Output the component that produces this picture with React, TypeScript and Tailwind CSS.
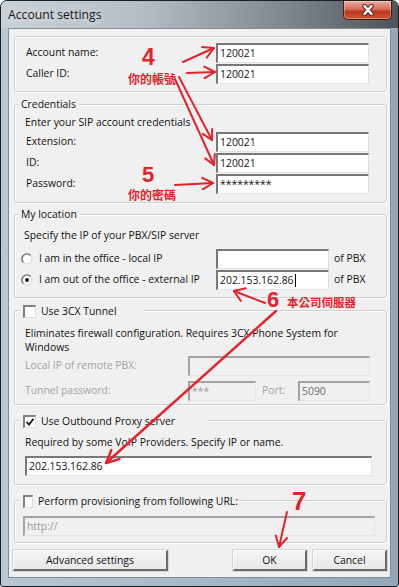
import React from "react";

const RED = "#e3232b";

function Arrow({
  x1,
  y1,
  x2,
  y2,
  len = 11,
  spread = 0.5,
  w = 2,
}: {
  x1: number;
  y1: number;
  x2: number;
  y2: number;
  len?: number;
  spread?: number;
  w?: number;
}) {
  const a = Math.atan2(y2 - y1, x2 - x1);
  const p1 = `${x2 - len * Math.cos(a - spread)},${y2 - len * Math.sin(a - spread)}`;
  const p2 = `${x2 - len * Math.cos(a + spread)},${y2 - len * Math.sin(a + spread)}`;
  return (
    <g>
      <line x1={x1} y1={y1} x2={x2} y2={y2} stroke={RED} strokeWidth={w} strokeLinecap="round" />
      <polyline
        points={`${p1} ${x2},${y2} ${p2}`}
        fill="none"
        stroke={RED}
        strokeWidth={w}
        strokeLinecap="round"
        strokeLinejoin="round"
      />
    </g>
  );
}

function TextBox({
  className = "",
  children,
  disabled = false,
}: {
  className?: string;
  children?: React.ReactNode;
  disabled?: boolean;
}) {
  const base =
    "h-[20px] flex items-center pl-[2px] border-t-2 border-l-2 border-r border-b whitespace-nowrap overflow-hidden leading-none";
  const look = disabled
    ? "bg-[#f0f0f0] border-t-[#a3a3a3] border-l-[#a3a3a3] border-r-[#e4e4e4] border-b-[#e4e4e4]"
    : "bg-white border-t-[#787878] border-l-[#787878] border-r-[#e1e1e1] border-b-[#e1e1e1]";
  return <div className={`${base} ${look} ${className}`}>{children}</div>;
}

function Check({ checked = false }: { checked?: boolean }) {
  return (
    <div className="w-[13px] h-[13px] bg-white border-t-2 border-l-2 border-r border-b border-t-[#808080] border-l-[#808080] border-r-[#dcdcdc] border-b-[#dcdcdc] flex items-center justify-center">
      {checked && (
        <svg width="10" height="10" viewBox="0 0 10 10">
          <path d="M1.5 5 L4 7.6 L8.6 1.8" fill="none" stroke="#111" strokeWidth="1.8" />
        </svg>
      )}
    </div>
  );
}

function Radio({ checked = false }: { checked?: boolean }) {
  return (
    <svg width="12" height="12" viewBox="0 0 12 12">
      <circle cx="6" cy="6" r="5" fill="#fff" stroke="#d6d6d6" strokeWidth="1" />
      <path d="M2.4 9.6 A5 5 0 0 1 9.6 2.4" fill="none" stroke="#6e6e6e" strokeWidth="1.4" />
      {checked && <circle cx="6" cy="6" r="1.9" fill="#111" />}
    </svg>
  );
}

function Group({
  className = "",
  legend,
  children,
}: {
  className?: string;
  legend?: React.ReactNode;
  children?: React.ReactNode;
}) {
  return (
    <div
      className={`relative ml-[5px] w-[373px] border border-[#cfcfcf] rounded-[3px] shadow-[inset_1px_1px_0_#ffffff,1px_1px_0_#ffffff] ${className}`}
    >
      {legend}
      {children}
    </div>
  );
}

function TextLegend({ label }: { label: string }) {
  return (
    <div className="absolute left-[3px] top-[-8px] h-[14px] px-[3px] bg-[#f0f0f0] leading-[14px]">{label}</div>
  );
}

function CheckLegend({ label, checked = false, w }: { label: string; checked?: boolean; w: string }) {
  return (
    <div className={`absolute left-[5px] top-[-7px] h-[14px] pl-[3px] bg-[#f0f0f0] flex items-center gap-[5px] ${w}`}>
      <Check checked={checked} />
      <span className="leading-[14px] whitespace-nowrap">{label}</span>
    </div>
  );
}

function Row({ label, value }: { label: string; value: string }) {
  return (
    <div className="flex items-center h-[20px]">
      <div className="w-[201px] pl-[11px]">{label}</div>
      <TextBox className="w-[153px]">{value}</TextBox>
    </div>
  );
}

function Button({ className = "", children }: { className?: string; children: React.ReactNode }) {
  return (
    <div
      className={`h-[21px] flex items-center justify-center bg-[linear-gradient(180deg,#f4f4f4,#e8e8e8)] border-t border-l border-r-2 border-b-2 border-t-[#fdfdfd] border-l-[#fdfdfd] border-r-[#6a6a6a] border-b-[#6a6a6a] shadow-[0_0_0_1px_#d4d4d4] leading-none ${className}`}
    >
      {children}
    </div>
  );
}

export default function App() {
  return (
    <div className="relative w-[399px] h-[587px] overflow-hidden bg-white font-['Open_Sans','Noto_Sans',sans-serif] text-[10.4px] text-[#111]">
      <div className="w-[399px] h-[587px] flex flex-col border border-[#1f1f1f] rounded-t-[7px] rounded-b-[3px] bg-[linear-gradient(90deg,#b9c7d3,#93a8ba)] overflow-hidden">
        {/* Title bar */}
        <div className="h-[27px] shrink-0 flex items-start bg-[linear-gradient(90deg,#c9d1d8_0%,#b5bec6_35%,#7f878e_72%,#4d545a_100%)]">
          <span className="mt-[5px] ml-[7px] text-[12.2px] leading-[17px] text-[#151515] [text-shadow:0_0_8px_#ffffff]">
            Account settings
          </span>
          <div className="ml-auto mr-[6px] w-[49px] h-[19px] rounded-b-[5px] border border-t-0 border-[#4a1c12] bg-[linear-gradient(180deg,#e9ada0_0%,#d8705b_45%,#c0371c_58%,#cc5636_100%)] shadow-[inset_0_0_0_1px_rgba(255,255,255,0.3)] flex items-center justify-center">
            <svg width="14" height="12" viewBox="0 0 14 12">
              <path d="M3.5 2 L10.5 10 M10.5 2 L3.5 10" stroke="#4a2a24" strokeWidth="4.4" strokeLinecap="round" />
              <path d="M3.5 2 L10.5 10 M10.5 2 L3.5 10" stroke="#ffffff" strokeWidth="2.4" strokeLinecap="round" />
            </svg>
          </div>
        </div>

        {/* Client area */}
        <div className="mx-[7px] h-[550px] shrink-0 bg-[#f0f0f0] border border-[#7f8d99] flex flex-col">
          <Group className="mt-[7px] h-[56px] pt-[6px] flex flex-col gap-[1px]">
            <Row label="Account name:" value="120021" />
            <Row label="Caller ID:" value="120021" />
          </Group>

          <Group legend={<TextLegend label="Credentials" />} className="mt-[12px] h-[99px] pt-[9px]">
            <div className="pl-[10px] h-[16px] leading-[16px]">Enter your SIP account credentials</div>
            <div className="mt-[2px] flex flex-col gap-[1px]">
              <Row label="Extension:" value="120021" />
              <Row label="ID:" value="120021" />
              <Row label="Password:" value="*********" />
            </div>
          </Group>

          <Group legend={<TextLegend label="My location" />} className="mt-[11px] h-[84px] pt-[12px]">
            <div className="pl-[9px] h-[16px] leading-[16px]">Specify the IP of your PBX/SIP server</div>
            <div className="mt-[6px] flex flex-col gap-[1px]">
              <div className="flex items-center h-[20px]">
                <div className="w-[201px] pl-[6px] flex items-center gap-[6px]">
                  <Radio />
                  <span>I am in the office - local IP</span>
                </div>
                <TextBox className="w-[113px]" />
                <span className="ml-[5px]">of PBX</span>
              </div>
              <div className="flex items-center h-[20px]">
                <div className="w-[201px] pl-[6px] flex items-center gap-[6px]">
                  <Radio checked />
                  <span>I am out of the office - external IP</span>
                </div>
                <TextBox className="w-[113px]">
                  <span>202.153.162.86</span>
                  <span className="ml-[1px] w-[1px] h-[13px] bg-black" />
                </TextBox>
                <span className="ml-[5px]">of PBX</span>
              </div>
            </div>
          </Group>

          <Group legend={<CheckLegend label="Use 3CX Tunnel" w="w-[123px]" />} className="mt-[12px] h-[95px] pt-[15px]">
            <div className="pl-[10px] leading-[14px] whitespace-nowrap">
              Eliminates firewall configuration. Requires 3CX Phone System for
              <br />
              Windows
            </div>
            <div className="mt-[2px] flex items-center h-[20px]">
              <div className="w-[173px] pl-[10px] text-[#a2a2a2]">Local IP of remote PBX:</div>
              <TextBox disabled className="w-[182px]" />
            </div>
            <div className="mt-[5px] flex items-center h-[20px]">
              <div className="w-[173px] pl-[10px] text-[#a2a2a2]">Tunnel password:</div>
              <TextBox disabled className="w-[68px]">
                <span className="text-[#a0a0a0]">***</span>
              </TextBox>
              <div className="w-[42px] pl-[6px] text-[#a2a2a2]">Port:</div>
              <TextBox disabled className="w-[72px]">
                <span className="text-[#6d6d6d]">5090</span>
              </TextBox>
            </div>
          </Group>

          <Group
            legend={<CheckLegend label="Use Outbound Proxy server" checked w="w-[188px]" />}
            className="mt-[15px] h-[65px] pt-[13px]"
          >
            <div className="pl-[10px] h-[16px] leading-[16px]">Required by some VoIP Providers. Specify IP or name.</div>
            <div className="mt-[6px] pl-[10px]">
              <TextBox className="w-[347px]">202.153.162.86</TextBox>
            </div>
          </Group>

          <Group
            legend={<CheckLegend label="Perform provisioning from following URL:" w="w-[218px]" />}
            className="mt-[15px] h-[43px] pt-[15px]"
          >
            <div className="pl-[8px]">
              <TextBox disabled className="w-[352px] border-l-[#555555]">
                <span className="text-[#9a9a9a]">http://</span>
              </TextBox>
            </div>
          </Group>

          <div className="mt-[7px] flex">
            <Button className="ml-[4px] w-[155px]">Advanced settings</Button>
            <Button className="ml-[65px] w-[74px]">OK</Button>
            <Button className="ml-[6px] w-[74px]">Cancel</Button>
          </div>
        </div>
      </div>

      {/* Red annotations overlay */}
      <div className="absolute left-0 top-0 w-[399px] h-[587px] pointer-events-none">
        <svg className="absolute left-0 top-0" width="399" height="587" viewBox="0 0 399 587">
          <Arrow x1={183} y1={62} x2={214} y2={48} len={12} />
          <Arrow x1={187} y1={73} x2={215} y2={72} len={12} />
          <Arrow x1={179} y1={77} x2={212} y2={140} len={11} />
          <Arrow x1={175} y1={79} x2={214} y2={165} len={11} />
          <Arrow x1={175} y1={185} x2={213} y2={183} len={12} />
          <Arrow x1={265} y1={303} x2={234} y2={291} len={12} spread={0.6} />
          <Arrow x1={276} y1={311} x2={106} y2={463} len={14} spread={0.45} w={2.4} />
          <Arrow x1={287} y1={512} x2={279} y2={547} len={12} spread={0.5} />
        </svg>
        <span className="absolute left-[142px] top-[47px] text-[23px] leading-[20px] font-bold text-[#e3232b] font-['Liberation_Sans',sans-serif]">
          4
        </span>
        <span className="absolute left-[128px] top-[73px] text-[12px] leading-none font-bold text-[#e3232b] font-['Noto_Sans_CJK_TC',sans-serif]">
          你的帳號
        </span>
        <span className="absolute left-[142px] top-[165px] text-[22px] leading-[20px] font-bold text-[#e3232b] font-['Liberation_Sans',sans-serif]">
          5
        </span>
        <span className="absolute left-[128px] top-[189px] text-[12px] leading-none font-bold text-[#e3232b] font-['Noto_Sans_CJK_TC',sans-serif]">
          你的密碼
        </span>
        <span className="absolute left-[267px] top-[290px] text-[22px] leading-[20px] font-bold text-[#e3232b] font-['Liberation_Sans',sans-serif]">
          6
        </span>
        <span className="absolute left-[287px] top-[297px] text-[11.5px] leading-none font-bold text-[#e3232b] font-['Noto_Sans_CJK_TC',sans-serif]">
          本公司伺服器
        </span>
        <span className="absolute left-[292px] top-[490px] text-[26px] leading-[22px] font-bold text-[#e3232b] font-['Liberation_Sans',sans-serif]">
          7
        </span>
      </div>
    </div>
  );
}
